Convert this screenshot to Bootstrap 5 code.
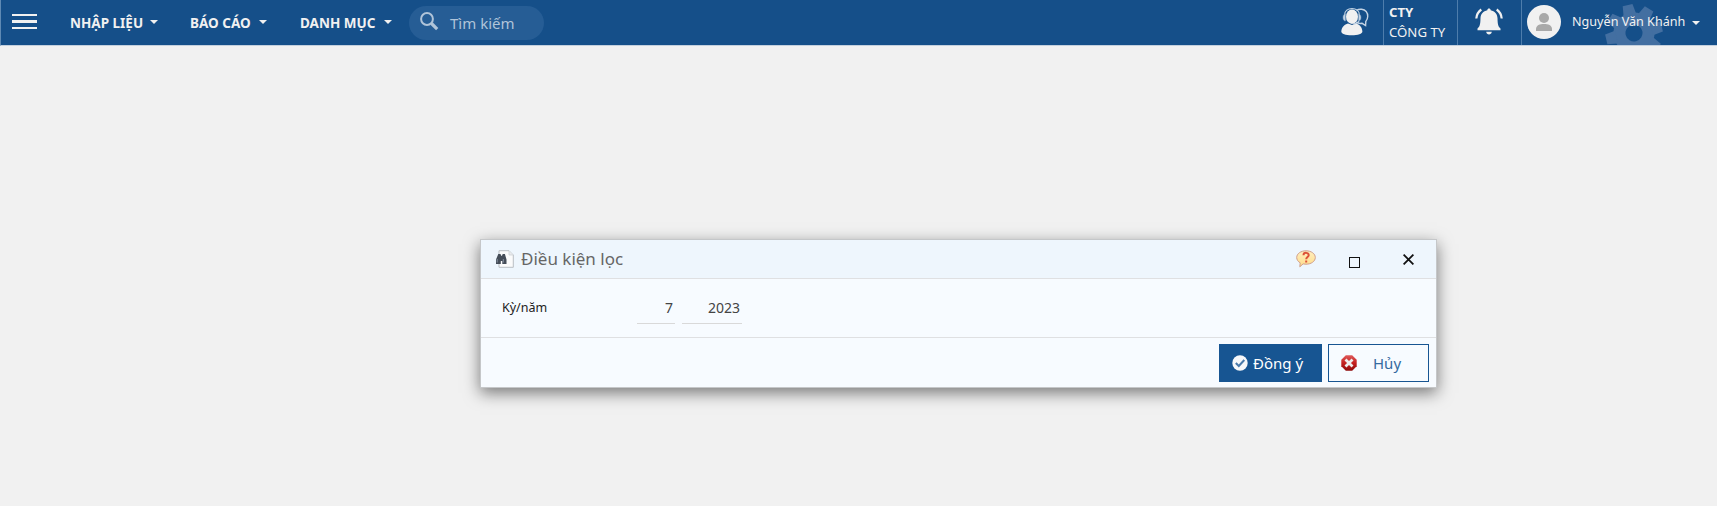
<!DOCTYPE html>
<html lang="vi">
<head>
<meta charset="utf-8">
<meta name="viewport" content="width=device-width, initial-scale=1">
<title>Điều kiện lọc</title>
<link rel="stylesheet" href="https://cdn.jsdelivr.net/npm/bootstrap@5.3.0/dist/css/bootstrap.min.css">
<style>
body{background:#f1f1f1;font-family:"Noto Sans","Open Sans",sans-serif;min-height:100vh}
svg{display:block;flex:none}
span,button,label{white-space:nowrap}
.topbar{height:46px;background:#154f89;border-bottom:1px solid #c3d0de;border-left:1px solid #5f8ab4;color:#f1f1f1}
.burger{width:25px;height:16px;margin-left:11px;margin-top:-2px}
.menus{margin-left:33px;margin-right:-1px}
.menu-link{font-size:13.5px;font-weight:700;line-height:20px;color:#f1f1f1}
.tri{width:8px;height:4px;background:#f1f1f1;clip-path:polygon(0 0,100% 0,50% 100%);margin-top:-1px}
.m1{width:120px}.m2{width:110px}.m3{width:110px}
.m1 .menu-link{width:80px}
.m2 .menu-link{width:69px}
.m3 .menu-link{width:84px}
.pill{width:135px;height:34px;background:#265d95;border-radius:17px;padding-left:11px;color:#b0c4d9;font-size:15px}
.pill svg{margin-top:-2px}
.pill span{margin:1px 0 0 11px}
.agent{margin-right:14px;margin-top:-2px}
.cell{border-left:1px solid #4e7dac;height:45px}
.company{width:74px;padding-left:5px;font-size:13.2px;line-height:20px}
.company .fw-bold{margin-top:2px}
.bell{width:64px;padding-left:17px}
.bell svg{margin-top:-2px}
.user{width:196px;padding-left:5px;font-size:12.6px}
.avatar{width:34px;height:34px;margin-top:-2px}
.user .name{margin:0 7px 0 11px;width:113px}
.user .tri{margin-top:1px}
.gear{left:83px;top:4px}
.dialog{margin:193px 0 0 480px;width:957px;height:149px;background:#f7fbff;border:1px solid #c5c7c9;box-shadow:0 5px 15px rgba(0,0,0,.5)}
.dialog-head{height:39px;background:#eef6fd;border-bottom:1px solid #dfe0e2;padding-left:15px}
.dialog-title{font-size:17px;color:#666;margin-left:7px}
.bubble{margin-right:33px}
.square{width:11px;height:11px;border:1px solid #111;margin:6px 43px 0 0}
.close-x{margin-right:22px;margin-top:1px}
.dialog-body{height:59px;border-bottom:1px solid #dfe0e2}
.period{width:135px;margin-left:21px;font-size:12.5px;color:#222}
.field{height:32px;border:0;border-bottom:1px solid #d9d9d9;background:transparent;color:#444;font-size:14px;text-align:right;padding:0 2px 1px 0;border-radius:0;outline:0}
.f-month{width:38px}
.f-year{width:60px;margin-left:7px}
.dialog-foot{padding:6px 7px 0 0;gap:6px}
.act{height:38px;border-radius:0;padding:0 0 0 12px;font-size:15px;border:1px solid #175592}
.ok{width:103px;background:#175592;color:#fff}
.ok span{margin-left:5px}
.cancel{width:101px;background:#f7fbff;color:#356a9f}
.cancel span{margin-left:16px}
</style>
</head>
<body>
<nav class="topbar d-flex align-items-center">
  <svg class="burger" viewBox="0 0 25 16" fill="#f1f1f1"><path d="M0 0h25v2H0zM0 6h25v3H0zM0 13h25v2H0z"/></svg>
  <div class="menus d-flex">
    <div class="m1 d-flex align-items-center"><span class="menu-link">NHẬP LIỆU</span><i class="tri"></i></div>
    <div class="m2 d-flex align-items-center"><span class="menu-link">BÁO CÁO</span><i class="tri"></i></div>
    <div class="m3 d-flex align-items-center"><span class="menu-link">DANH MỤC</span><i class="tri"></i></div>
  </div>
  <div class="pill d-flex align-items-center">
    <svg width="19" height="19" viewBox="0 0 19 19" fill="none" stroke="#b0c4d9"><circle cx="7" cy="7" r="5.9" stroke-width="2"/><path d="M11.500 11.500l5.700 5.700" stroke-width="3.2"/></svg>
    <span>Tìm kiếm</span>
  </div>
  <svg class="agent ms-auto" width="28" height="28" viewBox="0 0 28 28">
    <path d="M.3 23.500C.6 19 3.500 16.500 7 15.500l4 1.500 4-1.500c3.500 1 6.200 3.500 6.400 8 .1 2.300-4.500 3.700-10.700 3.700S.2 25.800.3 23.500z" fill="#f1f1f1"/>
    <ellipse cx="11" cy="8.700" rx="6" ry="7.300" fill="#f1f1f1"/>
    <path d="M3.600 7C3.600 2.800 7 .6 11 .6s7.400 2.200 7.400 6.400M18 13c-1 2-3 3-6 2.800" fill="none" stroke="#c3d3e4" stroke-width="1.200"/>
    <path d="M4.500 6C2.800 6 2 7.500 2 9.500S2.800 13 4.500 13zM17.500 6c1.700 0 2.500 1.500 2.500 3.500S19.200 13 17.500 13z" fill="#c3d3e4" stroke="#7698bc" stroke-width=".5"/>
    <path d="M15.500 2.300c3-1.700 7.500-1.400 9.700 1.200 2.200 2.700 2 7.500-.4 9.900l-.2 4.200-3.500-2.300c-2 .4-4.200.1-6-1.300" fill="none" stroke="#c3d3e4" stroke-width="1.400"/>
  </svg>
  <div class="cell company d-flex flex-column"><span class="fw-bold">CTY</span><span>CÔNG TY</span></div>
  <div class="cell bell d-flex align-items-center">
    <svg width="28" height="28" viewBox="0 0 28 28" fill="#f1f1f1">
      <path d="M12.300 2.300C12.300-.1 15.700-.1 15.700 2.300c4 .8 6.700 3.700 6.800 8 .1 6 .8 8.700 3 10.200V22.300h-23v-1.800C4.700 19 5.400 16.300 5.500 10.300c.1-4.300 2.800-7.200 6.800-8zM11.200 23.800h5.600c-.3 3.600-5.300 3.600-5.600 0z"/>
      <path d="M6.300 1.500C3.300 3.700 1.600 6.700 1.300 10.500M21.700 1.500c3 2.200 4.700 5.200 5 9" fill="none" stroke="#f1f1f1" stroke-width="2.200"/>
    </svg>
  </div>
  <div class="cell user d-flex align-items-center position-relative overflow-hidden">
    <svg class="gear position-absolute" width="58" height="58" viewBox="-29 -29 58 58">
      <g transform="rotate(-13)" fill="#436fa1"><path fill-rule="evenodd" d="M-20.500 0a20.500 20.500 0 1 0 41 0a20.500 20.500 0 1 0-41 0zM-8.500 0a8.500 8.500 0 1 0 17 0a8.500 8.500 0 1 0-17 0z"/>
        <path id="cog" d="M-6.500-18l1.500-10.500h10L6.500-18z"/><use href="#cog" transform="rotate(45)"/><use href="#cog" transform="rotate(90)"/><use href="#cog" transform="rotate(135)"/><use href="#cog" transform="rotate(180)"/><use href="#cog" transform="rotate(225)"/><use href="#cog" transform="rotate(270)"/><use href="#cog" transform="rotate(315)"/></g>
    </svg>
    <svg class="avatar" viewBox="0 0 34 34"><circle cx="17" cy="17" r="17" fill="#f1f1f1"/><circle cx="17" cy="13" r="5" fill="#a9a9a9"/><path d="M9 26v-2c0-3.700 3.800-5 8-5s8 1.300 8 5v2z" fill="#a9a9a9"/></svg>
    <span class="name position-relative">Nguyễn Văn Khánh</span><i class="tri position-relative"></i>
  </div>
</nav>
<main class="dialog d-inline-block">
  <div class="dialog-head d-flex align-items-center">
    <svg width="18" height="18" viewBox="0 0 18 18">
      <path d="M3 .7h10l4.300 4.300v12.300H3z" fill="#fbfbfb" stroke="#b9bec3"/><path d="M13 .7V5h4.300" fill="#e9ebed" stroke="#c9cdd1" stroke-width=".7"/>
      <path d="M2.300 4h2.200l.7 1.800h.8L6.700 4h2.200l1.600 5.500V14H6.300v-3H4.800v3H0V9.500z" fill="#454d58"/><path d="M1.200 9v3.500M7.300 9v3.500" stroke="#8590a0" stroke-width="1"/>
    </svg>
    <span class="dialog-title">Điều kiện lọc</span>
    <svg class="bubble ms-auto" width="20" height="18" viewBox="0 0 20 18">
      <defs><linearGradient id="warm" x1="0" y1="0" x2="0" y2="1"><stop offset="0" stop-color="#ffefc0"/><stop offset="1" stop-color="#ffdc88"/></linearGradient></defs>
      <path d="M10 .8c5.200 0 9.300 2.900 9.300 6.700s-4.100 6.700-9.300 6.700c-1 0-2-.1-2.900-.3L3.800 16.800l.4-4C2 11.600.7 9.700.7 7.500.7 3.700 4.800.8 10 .8z" fill="url(#warm)" stroke="#cf9f8c"/>
      <path d="M7.500 5.200c.1-3.200 5.300-3 5.200 0 0 1.900-2.500 1.900-2.500 4M10.200 10.400v2" fill="none" stroke="#dc5238" stroke-width="2"/>
    </svg>
    <i class="square"></i>
    <svg class="close-x" width="11" height="11" viewBox="0 0 11 11" stroke="#111" stroke-width="1.800"><path d="M.6.600l9.800 9.800M10.400.600L.6 10.400"/></svg>
  </div>
  <div class="dialog-body d-flex align-items-center"><label class="period" for="month">Kỳ/năm</label><input id="month" class="field f-month" value="7"><input class="field f-year" value="2023"></div>
  <div class="dialog-foot d-flex justify-content-end">
    <button class="act ok d-flex align-items-center"><svg width="16" height="16" viewBox="0 0 16 16"><circle cx="8" cy="8" r="7.700" fill="#f7f8fa"/><path d="M3.800 8l3 3 5.500-6" fill="none" stroke="#4a7aaa" stroke-width="2"/></svg><span>Đồng ý</span></button>
    <button class="act cancel d-flex align-items-center"><svg width="16" height="16" viewBox="0 0 16 16"><defs><linearGradient id="red" x1="0" y1="0" x2="0" y2="1"><stop offset="0" stop-color="#df5b5b"/><stop offset=".5" stop-color="#c4201f"/><stop offset="1" stop-color="#8f0b0b"/></linearGradient></defs><path d="M4.800.3h6.400l4.500 4.500v6.400l-4.500 4.500H4.800L.3 11.200V4.800z" fill="url(#red)"/><path d="M4.500 4.500l7 7M11.500 4.500l-7 7" stroke="#eee" stroke-width="2.800"/></svg><span>Hủy</span></button>
  </div>
</main>
<script src="https://cdn.jsdelivr.net/npm/bootstrap@5.3.0/dist/js/bootstrap.bundle.min.js"></script>
</body>
</html>
